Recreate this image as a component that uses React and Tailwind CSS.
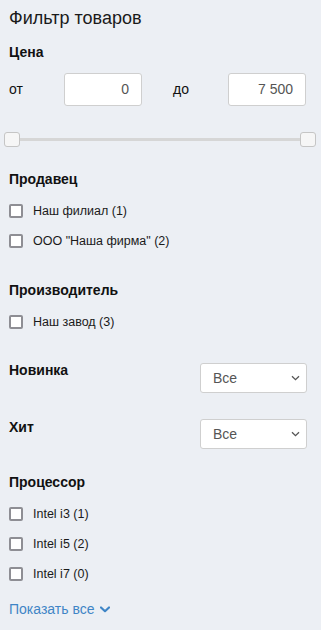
import React from "react";

function Checkbox({ label }) {
  return (
    <div className="flex h-[30px] items-center">
      <span className="box-border h-[14px] w-[14px] rounded-[2px] border-2 border-[#8e8e94] bg-white" />
      <span className="ml-[10px] text-[12.5px] leading-[16px] text-[#1a1a1a]">{label}</span>
    </div>
  );
}

function Heading({ children, className = "" }) {
  return <div className={"text-[14px] font-bold leading-[20px] text-[#111] " + className}>{children}</div>;
}

function Select() {
  return (
    <div className="flex h-[30px] w-[107px] items-center justify-between rounded-[3px] border border-[#cfcfcf] bg-white pl-[12px] pr-[6px]">
      <span className="text-[14px] text-[#555]">Все</span>
      <svg width="9" height="6" viewBox="0 0 9 6" fill="none">
        <path d="M1 1.2 L4.5 4.6 L8 1.2" stroke="#555" strokeWidth="1.3" />
      </svg>
    </div>
  );
}

export default function App() {
  return (
    <div className="min-h-[630px] w-[321px] bg-[#eceff4] pl-[9px] pr-[14px] font-['Liberation_Sans',Arial,sans-serif]">
      <div className="pt-[6px] text-[18px] leading-[24px] text-[#1a1a1a]">Фильтр товаров</div>

      <Heading className="mt-[12px]">Цена</Heading>
      <div className="mt-[11px] flex items-center">
        <span className="w-[55px] text-[14px] text-[#111]">от</span>
        <div className="flex h-[33px] w-[78px] items-center justify-end rounded-[3px] border border-[#cfcfcf] bg-white pr-[12px] text-[14px] text-[#555]">0</div>
        <span className="ml-[31px] w-[55px] text-[14px] text-[#111]">до</span>
        <div className="flex h-[33px] w-[78px] items-center justify-end rounded-[3px] border border-[#cfcfcf] bg-white pr-[12px] text-[14px] text-[#555]">7 500</div>
      </div>

      <div className="relative ml-[-5px] mr-[-9px] mt-[26px] h-[15px]">
        <div className="absolute left-[8px] right-[8px] top-[6px] h-[3px] bg-[#d6d6d6]" />
        <div className="absolute left-0 top-0 h-[15px] w-[16px] rounded-[3px] border border-[#c5c5c5] bg-[#f6f6f6]" />
        <div className="absolute right-0 top-0 h-[15px] w-[16px] rounded-[3px] border border-[#c5c5c5] bg-[#f6f6f6]" />
      </div>

      <Heading className="mt-[22px]">Продавец</Heading>
      <div className="mt-[7px]">
        <Checkbox label="Наш филиал (1)" />
        <Checkbox label={'ООО "Наша фирма" (2)'} />
      </div>

      <Heading className="mt-[24px]">Производитель</Heading>
      <div className="mt-[7px]">
        <Checkbox label="Наш завод (3)" />
      </div>

      <div className="mt-[23px] flex items-start justify-between">
        <Heading>Новинка</Heading>
        <div className="mt-[3px]">
          <Select />
        </div>
      </div>

      <div className="mt-[24px] flex items-start justify-between">
        <Heading>Хит</Heading>
        <div className="mt-[2px]">
          <Select />
        </div>
      </div>

      <Heading className="mt-[23px]">Процессор</Heading>
      <div className="mt-[7px]">
        <Checkbox label="Intel i3 (1)" />
        <Checkbox label="Intel i5 (2)" />
        <Checkbox label="Intel i7 (0)" />
      </div>

      <div className="mt-[10px] flex items-center text-[14px] leading-[20px] text-[#3f85c6]">
        <span>Показать все</span>
        <svg className="ml-[6px]" width="10" height="7" viewBox="0 0 10 7">
          <path d="M1 1.5 L5 5.2 L9 1.5" stroke="#3f85c6" strokeWidth="2.2" fill="none" strokeLinecap="round" strokeLinejoin="round" />
        </svg>
      </div>
    </div>
  );
}
